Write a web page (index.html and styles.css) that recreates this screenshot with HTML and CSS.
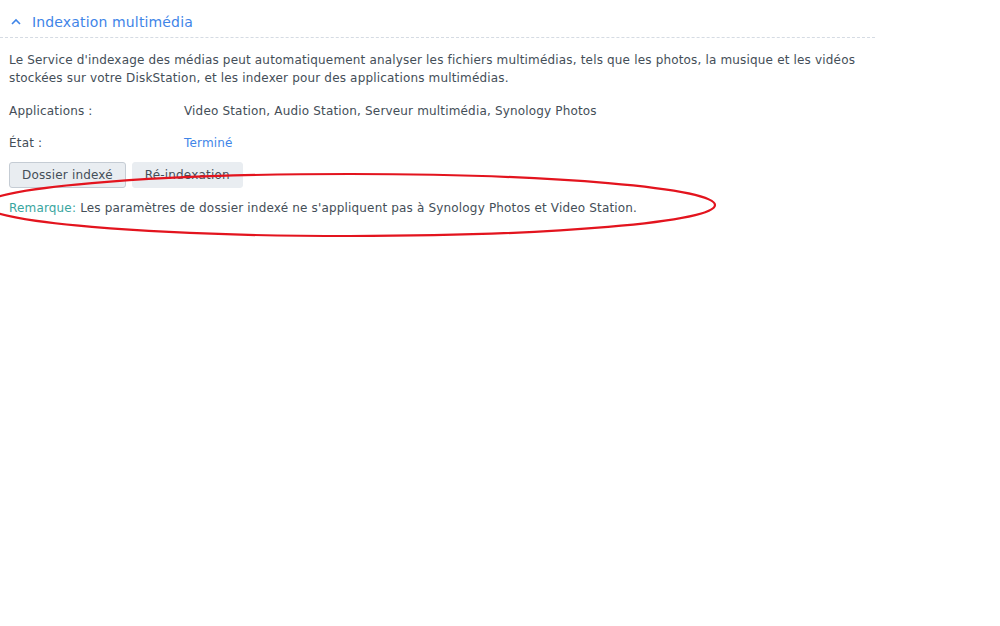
FILE: index.html
```html
<!DOCTYPE html>
<html lang="fr">
<head>
<meta charset="utf-8">
<link rel="stylesheet" href="styles.css">
</head>
<body>
<div class="page">
  <section class="panel">
    <div class="panel-head">
      <svg class="chev" width="10" height="7" viewBox="0 0 10 7"><path d="M1 6 L5 2 L9 6" fill="none" stroke="#3f85e8" stroke-width="1.6"/></svg>
      <span class="title">Indexation multimédia</span>
    </div>
    <div class="panel-body">
      <p class="desc">Le Service d'indexage des médias peut automatiquement analyser les fichiers multimédias, tels que les photos, la musique et les vidéos stockées sur votre DiskStation, et les indexer pour des applications multimédias.</p>
      <div class="row row-apps"><span class="label">Applications :</span><span class="value">Video Station, Audio Station, Serveur multimédia, Synology Photos</span></div>
      <div class="row row-state"><span class="label">État :</span><span class="value done">Terminé</span></div>
      <div class="buttons">
        <button class="btn btn-outline">Dossier indexé</button>
        <button class="btn">Ré-indexation</button>
      </div>
      <p class="note"><span class="note-key">Remarque:</span> Les paramètres de dossier indexé ne s'appliquent pas à Synology Photos et Video Station.</p>
    </div>
  </section>
  <svg class="mark" width="1000" height="626" viewBox="0 0 1000 626"><ellipse cx="350" cy="205" rx="365" ry="31" fill="none" stroke="#e3141e" stroke-width="2.2"/></svg>
</div>
</body>
</html>
```
FILE: styles.css
```css
html, body { margin: 0; padding: 0; background: #fff; }
body { font-family: "DejaVu Sans", "Noto Sans", sans-serif; font-size: 12px; letter-spacing: 0.17px; color: #444e58; }
.page { position: relative; width: 1000px; height: 626px; overflow: hidden; }
.panel { width: 875px; }
.panel-head { display: flex; align-items: center; height: 38px; border-bottom: 1px dashed #d5dbe3; box-sizing: border-box; padding: 6px 0 0 11px; gap: 11px; }
.chev { display: block; }
.title { color: #3f85e8; font-size: 14px; letter-spacing: 0.15px; }
.panel-body { padding: 0 9px; }
.desc { margin: 13px 0 0; line-height: 18px; }
.row { display: flex; line-height: 18px; }
.row-apps { margin-top: 15px; }
.row-state { margin-top: 14px; }
.label { width: 175px; flex: none; }
.done { color: #3f85e8; }
.buttons { display: flex; gap: 6px; margin-top: 10px; }
.btn { font-family: inherit; font-size: 12px; letter-spacing: 0.17px; color: #444e58; height: 26px; padding: 0 12px; border-radius: 3px; background: #e9edf1; border: 1px solid #e9edf1; }
.btn-outline { border-color: #c5ccd4; }
.note { margin: 11px 0 0; line-height: 18px; }
.note-key { color: #3aa6a0; }
.mark { position: absolute; left: 0; top: 0; pointer-events: none; }
```
